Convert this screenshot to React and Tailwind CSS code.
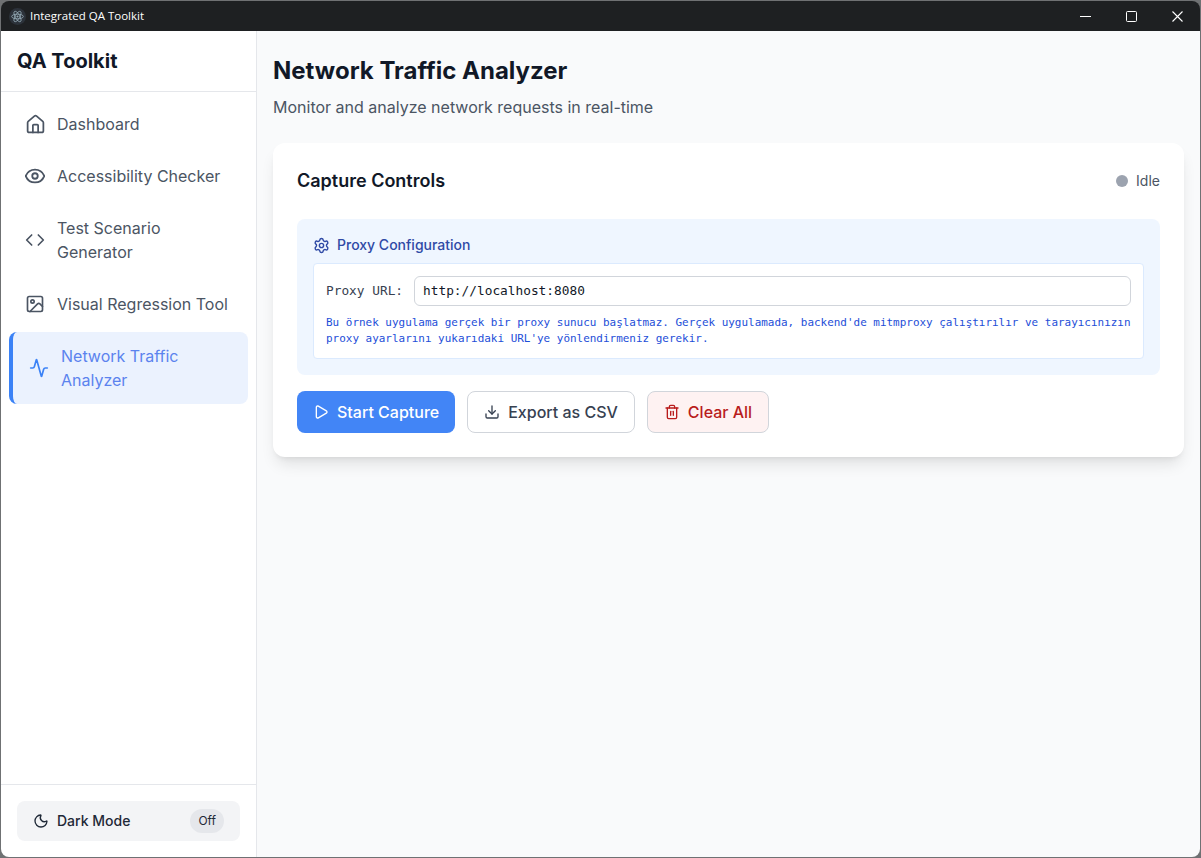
import React from 'react';
import { House, Eye, Code, Image, Activity, Moon, Settings, Play, Download, Trash2 } from 'lucide-react';

const inter = { fontFamily: 'Inter, sans-serif' };

const navItems = [
  { label: 'Dashboard', icon: House, size: 21 },
  { label: 'Accessibility Checker', icon: Eye, size: 22 },
  { label: 'Test Scenario Generator', icon: Code, size: 20 },
  { label: 'Visual Regression Tool', icon: Image, size: 20 },
  { label: 'Network Traffic Analyzer', icon: Activity, size: 20, active: true },
];

function TitleBar() {
  return (
    <div className="flex h-[30px] shrink-0 items-center justify-between bg-[#1e2022] text-white">
      <div className="flex items-center gap-[4px] pl-[8px]">
        <svg width="17" height="17" viewBox="0 0 16 16" fill="none">
          <circle cx="8" cy="8" r="8" fill="#2c323a" />
          <g stroke="#93a9b5" strokeWidth="0.8">
            <ellipse cx="8" cy="8" rx="5.5" ry="2.2" />
            <ellipse cx="8" cy="8" rx="5.5" ry="2.2" transform="rotate(60 8 8)" />
            <ellipse cx="8" cy="8" rx="5.5" ry="2.2" transform="rotate(120 8 8)" />
          </g>
          <circle cx="8" cy="8" r="1" fill="#93a9b5" />
        </svg>
        <span className="text-[11.5px] font-['Open_Sans',sans-serif]">Integrated QA Toolkit</span>
      </div>
      <div className="flex items-center">
        <button className="flex h-[30px] w-[46px] items-center justify-center">
          <svg width="11" height="11" viewBox="0 0 11 11" stroke="white" strokeWidth="1"><path d="M0 5.5h11" /></svg>
        </button>
        <button className="flex h-[30px] w-[46px] items-center justify-center">
          <svg width="11" height="11" viewBox="0 0 11 11" fill="none" stroke="white" strokeWidth="1"><rect x="0.5" y="0.5" width="10" height="10" rx="1" /></svg>
        </button>
        <button className="flex h-[30px] w-[46px] items-center justify-center">
          <svg width="11" height="11" viewBox="0 0 11 11" stroke="white" strokeWidth="1.1"><path d="M0.5 0.5l10 10M10.5 0.5l-10 10" /></svg>
        </button>
      </div>
    </div>
  );
}

function Sidebar() {
  return (
    <aside className="flex w-[256px] shrink-0 flex-col border-r border-[#e5e7eb] bg-white">
      <div className="flex h-[61px] items-center border-b border-[#e5e7eb] px-4">
        <h1 className="text-xl font-bold text-[#111827]">QA Toolkit</h1>
      </div>
      <nav className="flex flex-1 flex-col gap-1 p-2">
        {navItems.map(({ label, icon: Icon, size, active }) => (
          <a
            key={label}
            className={
              active
                ? 'flex items-center gap-[11px] rounded-lg border-l-4 border-[#3b82f6] bg-[#ebf2fe] px-[15px] py-3 text-[#5b83ee]'
                : 'flex items-center gap-[11px] rounded-lg px-[15px] py-3 text-[#4b5563]'
            }
          >
            <span className="flex w-[22px] shrink-0 justify-center">
              <Icon size={size} color={active ? '#3b82f6' : '#4b5563'} />
            </span>
            <span className="text-base">{label}</span>
          </a>
        ))}
      </nav>
      <div className="border-t border-[#e5e7eb] p-4">
        <button className="flex h-10 w-full items-center justify-between rounded-lg bg-[#f3f4f6] px-4">
          <span className="flex items-center gap-2 text-sm font-medium text-[#1f2937]">
            <Moon size={16} />
            Dark Mode
          </span>
          <span className="rounded-full bg-[#e5e7eb] px-2 py-1 text-xs text-[#1f2937]">Off</span>
        </button>
      </div>
    </aside>
  );
}

function CaptureControls() {
  return (
    <div className="rounded-xl bg-white p-6 shadow-lg">
      <div className="mb-6 flex items-center justify-between">
        <h3 className="text-lg font-semibold text-[#111827]">Capture Controls</h3>
        <div className="flex items-center gap-2 text-sm text-[#4b5563]">
          <span className="h-3 w-3 rounded-full bg-[#9ca3af]" />
          Idle
        </div>
      </div>
      <div className="mb-4 rounded-lg bg-[#eff6ff] p-4">
        <div className="mb-2 flex items-center gap-[7px] text-sm font-medium text-[#2f4aa6]">
          <Settings size={17} />
          Proxy Configuration
        </div>
        <div className="rounded border border-[#dbeafe] bg-white px-3 pb-[11px] pt-3 font-['DejaVu_Sans_Mono',monospace]">
          <div className="mb-[9px] flex items-center gap-[11px]">
            <label className="text-[12.8px] text-[#374151]">Proxy URL:</label>
            <input
              readOnly
              value="http://localhost:8080"
              className="h-[30px] flex-1 rounded-md border border-[#d1d5db] px-2 pb-[2px] text-[12.8px] text-[#111827]"
            />
          </div>
          <p className="text-[10.96px] leading-4 text-[#1d4ed8]">
            Bu örnek uygulama gerçek bir proxy sunucu başlatmaz. Gerçek uygulamada, backend'de mitmproxy çalıştırılır ve tarayıcınızın proxy ayarlarını yukarıdaki URL'ye yönlendirmeniz gerekir.
          </p>
        </div>
      </div>
      <div className="flex gap-3">
        <button className="flex h-[42px] items-center gap-2 rounded-lg bg-[#4285f6] px-4 font-medium text-white">
          <Play size={16} />
          Start Capture
        </button>
        <button className="flex h-[42px] items-center gap-2 rounded-lg border border-[#d1d5db] bg-white px-4 font-medium text-[#374151]">
          <Download size={16} />
          Export as CSV
        </button>
        <button className="flex h-[42px] items-center gap-2 rounded-lg border border-[#d1d5db] bg-[#fef2f2] px-4 font-medium text-[#b91c1c]">
          <Trash2 size={16} />
          Clear All
        </button>
      </div>
    </div>
  );
}

export default function App() {
  return (
    <div className="h-screen w-screen bg-[#6f7173] p-px" style={inter}>
      <div className="flex h-full flex-col overflow-hidden rounded-lg">
        <TitleBar />
        <div className="flex min-h-0 flex-1">
          <Sidebar />
          <main className="flex-1 bg-[#f9fafb] px-4 py-6">
            <h2 className="mb-2 text-2xl font-bold text-[#111827]">Network Traffic Analyzer</h2>
            <p className="mb-6 text-base text-[#4b5563]">Monitor and analyze network requests in real-time</p>
            <CaptureControls />
          </main>
        </div>
      </div>
    </div>
  );
}
